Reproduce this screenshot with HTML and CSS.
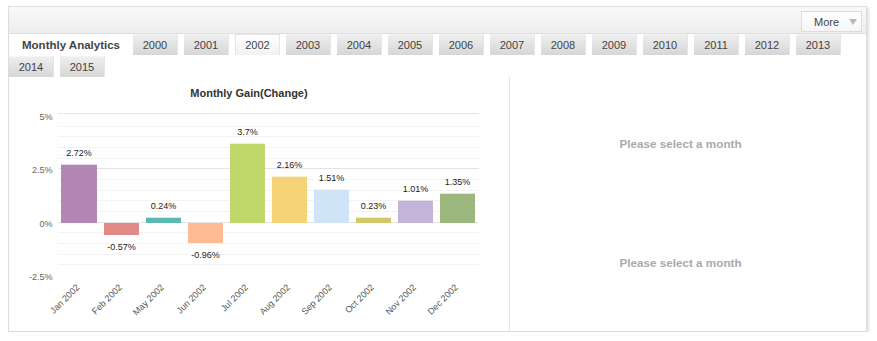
FILE: index.html
```html
<!DOCTYPE html>
<html>
<head>
<meta charset="utf-8">
<link rel="stylesheet" href="styles.css">
</head>
<body>
<div class="widget">
  <div class="header">
    <div class="more">More <span class="caret"></span></div>
  </div>
  <div class="tabs">
    <div class="title-tab">Monthly Analytics</div>
    <div class="tab">2000</div>
    <div class="tab">2001</div>
    <div class="tab active">2002</div>
    <div class="tab">2003</div>
    <div class="tab">2004</div>
    <div class="tab">2005</div>
    <div class="tab">2006</div>
    <div class="tab">2007</div>
    <div class="tab">2008</div>
    <div class="tab">2009</div>
    <div class="tab">2010</div>
    <div class="tab">2011</div>
    <div class="tab">2012</div>
    <div class="tab">2013</div>
    <div class="tab">2014</div>
    <div class="tab">2015</div>
  </div>
  <div class="content">
    <div class="chart-panel">
      <svg class="chart" width="500" height="254" viewBox="9 77 500 254">
        <text class="ctitle" x="249" y="97" text-anchor="middle">Monthly Gain(Change)</text>
        <g class="minor">
          <line x1="58" x2="479" y1="126.5" y2="126.5"/>
          <line x1="58" x2="479" y1="136.5" y2="136.5"/>
          <line x1="58" x2="479" y1="147.5" y2="147.5"/>
          <line x1="58" x2="479" y1="158.5" y2="158.5"/>
          <line x1="58" x2="479" y1="179.5" y2="179.5"/>
          <line x1="58" x2="479" y1="190.5" y2="190.5"/>
          <line x1="58" x2="479" y1="200.5" y2="200.5"/>
          <line x1="58" x2="479" y1="211.5" y2="211.5"/>
          <line x1="58" x2="479" y1="232.5" y2="232.5"/>
          <line x1="58" x2="479" y1="243.5" y2="243.5"/>
          <line x1="58" x2="479" y1="254.5" y2="254.5"/>
          <line x1="58" x2="479" y1="264.5" y2="264.5"/>
        </g>
        <g class="major">
          <line x1="58" x2="479" y1="113.5" y2="113.5"/>
          <line x1="58" x2="479" y1="168.5" y2="168.5"/>
          <line x1="58" x2="479" y1="222.5" y2="222.5"/>
        </g>
        <g class="ylab">
          <text x="52.5" y="120" text-anchor="end">5%</text>
          <text x="52.5" y="173" text-anchor="end">2.5%</text>
          <text x="52.5" y="227" text-anchor="end">0%</text>
          <text x="52.5" y="280" text-anchor="end">-2.5%</text>
        </g>
        <g class="bars">
          <rect x="61" y="164.7" width="36" height="58.3" fill="#b386b4"/>
          <rect x="104" y="223" width="35" height="12" fill="#e48a86"/>
          <rect x="146" y="217.7" width="35" height="5.3" fill="#5ab8b5"/>
          <rect x="188" y="223" width="35" height="20" fill="#fdbc94"/>
          <rect x="230" y="143.7" width="35" height="79.3" fill="#bfd76b"/>
          <rect x="272" y="176.7" width="35" height="46.3" fill="#f4d477"/>
          <rect x="314" y="189.7" width="35" height="33.3" fill="#cfe4f7"/>
          <rect x="356" y="217.7" width="35" height="5.3" fill="#d2c86a"/>
          <rect x="398" y="200.7" width="35" height="22.3" fill="#c5b4d7"/>
          <rect x="440" y="193.7" width="35" height="29.3" fill="#9cb77e"/>
        </g>
        <g class="vlab">
          <text x="79" y="156" text-anchor="middle">2.72%</text>
          <text x="121.5" y="250" text-anchor="middle">-0.57%</text>
          <text x="163.5" y="209.3" text-anchor="middle">0.24%</text>
          <text x="205.5" y="257.7" text-anchor="middle">-0.96%</text>
          <text x="247.5" y="135.3" text-anchor="middle">3.7%</text>
          <text x="289.5" y="168.3" text-anchor="middle">2.16%</text>
          <text x="331.5" y="181.3" text-anchor="middle">1.51%</text>
          <text x="373.5" y="209.3" text-anchor="middle">0.23%</text>
          <text x="415.5" y="192.3" text-anchor="middle">1.01%</text>
          <text x="457.5" y="185.3" text-anchor="middle">1.35%</text>
        </g>
        <g class="xlab">
          <text transform="translate(80 288) rotate(-45)" text-anchor="end">Jan 2002</text>
          <text transform="translate(122.5 288) rotate(-45)" text-anchor="end">Feb 2002</text>
          <text transform="translate(164.5 288) rotate(-45)" text-anchor="end">May 2002</text>
          <text transform="translate(206.5 288) rotate(-45)" text-anchor="end">Jun 2002</text>
          <text transform="translate(248.5 288) rotate(-45)" text-anchor="end">Jul 2002</text>
          <text transform="translate(290.5 288) rotate(-45)" text-anchor="end">Aug 2002</text>
          <text transform="translate(332.5 288) rotate(-45)" text-anchor="end">Sep 2002</text>
          <text transform="translate(374.5 288) rotate(-45)" text-anchor="end">Oct 2002</text>
          <text transform="translate(416.5 288) rotate(-45)" text-anchor="end">Nov 2002</text>
          <text transform="translate(458.5 288) rotate(-45)" text-anchor="end">Dec 2002</text>
        </g>
      </svg>
    </div>
    <div class="detail-panel">
      <div class="placeholder first">Please select a month</div>
      <div class="placeholder second">Please select a month</div>
    </div>
  </div>
</div>
</body>
</html>
```

FILE: styles.css
```css
html, body {
  margin: 0;
  padding: 0;
  background: #ffffff;
}
body {
  font-family: "Liberation Sans", Arial, sans-serif;
}
.widget {
  margin: 6px 0 0 8px;
  width: 857px;
  border: 1px solid #dcdcdc;
  background: #ffffff;
  box-shadow: 2px 2px 2px rgba(0, 0, 0, 0.12);
}
.header {
  height: 26px;
  background: linear-gradient(#f9f9f9, #eeeeee);
  border-bottom: 1px solid #dedede;
  display: flex;
  justify-content: flex-end;
  align-items: flex-start;
}
.more {
  margin: 4px 4px 0 0;
  width: 59px;
  height: 19px;
  border: 1px solid #dcdcdc;
  background: linear-gradient(#ffffff, #f6f6f6);
  font-size: 11px;
  color: #444;
  display: flex;
  align-items: center;
  text-indent: 12px;
  position: relative;
}
.caret {
  position: absolute;
  right: 4px;
  top: 7px;
  width: 0;
  height: 0;
  border-left: 4px solid transparent;
  border-right: 4px solid transparent;
  border-top: 6px solid #b8b8b8;
  text-indent: 0;
}
.tabs {
  display: flex;
  flex-wrap: wrap;
  row-gap: 1px;
  height: 43px;
  align-content: flex-start;
}
.title-tab {
  width: 124px;
  height: 21px;
  font-size: 11.5px;
  font-weight: bold;
  color: #444;
  display: flex;
  align-items: center;
  justify-content: center;
  background: #ffffff;
}
.tab {
  width: 45px;
  height: 21px;
  margin-right: 6px;
  box-sizing: border-box;
  font-size: 11px;
  color: #444;
  display: flex;
  align-items: center;
  justify-content: center;
  background: linear-gradient(#eeeeee, #d6d6d6);
  border-top: 1px solid #f4f4f4;
  border-right: 1px solid #e6e6e6;
}
.tab.active {
  background: linear-gradient(#ffffff, #f1f1f1);
  border: 1px solid #e4e4e4;
  border-bottom: none;
}
.content {
  display: flex;
  height: 254px;
}
.chart-panel {
  width: 500px;
  border-right: 1px solid #e6e6e6;
}
.chart {
  display: block;
  font-family: "Liberation Sans", Arial, sans-serif;
}
.ctitle {
  font-size: 11px;
  font-weight: bold;
  fill: #333;
}
.minor line {
  stroke: #f3f3f3;
  stroke-width: 1;
}
.major line {
  stroke: #e4e4e4;
  stroke-width: 1;
}
.ylab text {
  font-size: 9px;
  fill: #666;
}
.vlab text {
  font-size: 9px;
  fill: #222;
}
.xlab text {
  font-size: 9px;
  fill: #555;
}
.detail-panel {
  flex: 1;
  display: flex;
  flex-direction: column;
  align-items: center;
  padding-right: 15px;
}
.placeholder {
  font-size: 11.7px;
  font-weight: bold;
  color: #aaaaaa;
}
.first {
  margin-top: 60px;
}
.second {
  margin-top: 106px;
}
```
